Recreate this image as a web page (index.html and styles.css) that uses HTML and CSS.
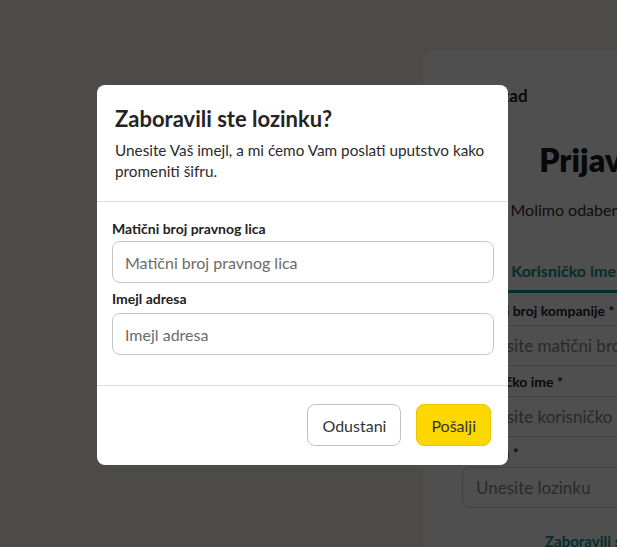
FILE: index.html
```html
<html>
    <head>
        <link rel="stylesheet" href="styles.css">
    </head>
    <body>
        <div class="login-card">
            <a class="back" href="#">
                <svg width="14" height="14" viewBox="0 0 14 14"><path d="M9 2 L4 7 L9 12" fill="none" stroke="#1a1a1a" stroke-width="2" stroke-linecap="round" stroke-linejoin="round"/></svg>
                Nazad
            </a>
            <h1>Prijavite se</h1>
            <p class="lead">Molimo odaberite način prijave</p>
            <div class="tabs">
                <span class="tab">eID</span>
                <span class="tab active">Korisničko ime</span>
            </div>
            <form class="login-form">
                <label>Matični broj kompanije *</label>
                <input type="text" placeholder="Unesite matični broj">
                <label>Korisničko ime *</label>
                <input type="text" placeholder="Unesite korisničko ime">
                <label>Lozinka *</label>
                <input type="password" placeholder="Unesite lozinku">
            </form>
            <a class="forgot" href="#">Zaboravili ste lozinku?</a>
        </div>

        <div class="overlay">
            <div class="modal">
                <div class="modal-header">
                    <h2>Zaboravili ste lozinku?</h2>
                    <p>Unesite Vaš imejl, a mi ćemo Vam poslati uputstvo kako promeniti šifru.</p>
                </div>
                <form class="modal-body">
                    <label for="mb">Matični broj pravnog lica</label>
                    <input type="text" id="mb" placeholder="Matični broj pravnog lica">
                    <label for="email">Imejl adresa</label>
                    <input type="text" id="email" placeholder="Imejl adresa">
                </form>
                <div class="modal-footer">
                    <button class="btn">Odustani</button>
                    <button class="btn primary">Pošalji</button>
                </div>
            </div>
        </div>
    </body>
</html>
```

FILE: styles.css
```css
body {margin: 0; padding: 50px 0 0 423px; background-color: #f7f0e9; font-family: Lato, "Noto Sans", sans-serif; color: #222; overflow: hidden; height: 547px; box-sizing: border-box;}

.login-card {background: #fff; width: 392px; min-height: 700px; border-radius: 12px; padding: 35px 39px 0 39px; box-sizing: border-box;}
.back {display: flex; align-items: center; gap: 4px; font-weight: bold; font-size: 17px; color: #1a1a1a; text-decoration: none; height: 20px;}
.login-card h1 {font-size: 32px; font-weight: 800; text-align: center; margin: 35px 0 0 0; color: #1a1a1a; line-height: 40px;}
.lead {text-align: center; font-size: 16px; margin: 20px 0 0 0; color: #333;}
.tabs {display: flex; margin: 42px 0 0 0; }
.tab {padding: 0 12px 10px 12px; font-size: 16px; font-weight: bold; color: #888;}
.tab:first-child {padding-left: 0;}
.tab.active {color: #178e8e; border-bottom: 3px solid #178e8e; flex: 1;}
.login-form {display: flex; flex-direction: column; margin-top: 7px;}
.login-form label {font-size: 14px; font-weight: bold; color: #222; height: 22px; line-height: 22px;}
.login-form input {height: 41px; border: 1px solid #ccc; border-radius: 8px; padding: 0 13px; font-size: 17px; font-family: inherit; margin: 3px 0 5px 0;}
.login-form input::placeholder {color: #888;}
.forgot {display: block; text-align: center; color: #178e8e; font-weight: bold; font-size: 15px; text-decoration: none; margin-top: 19px;}

.overlay {position: fixed; top: 0; left: 0; right: 0; bottom: 0; background: rgba(0, 0, 0, 0.69); padding: 85px 0 0 97px;}
.modal {background: #fff; width: 411px; border-radius: 8px;}
.modal-header {padding: 21px 18px 19px 18px; border-bottom: 1px solid #dedede;}
.modal-header h2 {margin: 0; font-size: 22px; font-weight: bold; color: #242424; line-height: 26px;}
.modal-header p {margin: 8px 0 0 0; font-size: 15.3px; line-height: 21px; color: #2b2b2b;}
.modal-body {display: flex; flex-direction: column; padding: 17px 14px 30px 15px; margin: 0; border-bottom: 1px solid #dedede;}
.modal-body label {font-size: 14px; font-weight: bold; color: #222; line-height: 20px; margin-bottom: 2px;}
.modal-body input {height: 42px; border: 1px solid #c6c6c6; border-radius: 8px; padding: 0 12px; font-size: 16px; font-family: inherit; margin-bottom: 6px; color: #222;}
.modal-body input:last-child {margin: 2px 0 0 0;}
.modal-body input::placeholder {color: #6b6b6b;}
.modal-footer {display: flex; justify-content: flex-end; gap: 15px; padding: 18px 17px 19px 17px;}
.btn {height: 42px; padding: 0 14px; border: 1px solid #c2c2c2; border-radius: 8px; background: #fff; font-family: inherit; font-size: 16px; color: #333; cursor: pointer;}
.btn.primary {background: #fcd700; border-color: #e8c600; color: #333;}
```
